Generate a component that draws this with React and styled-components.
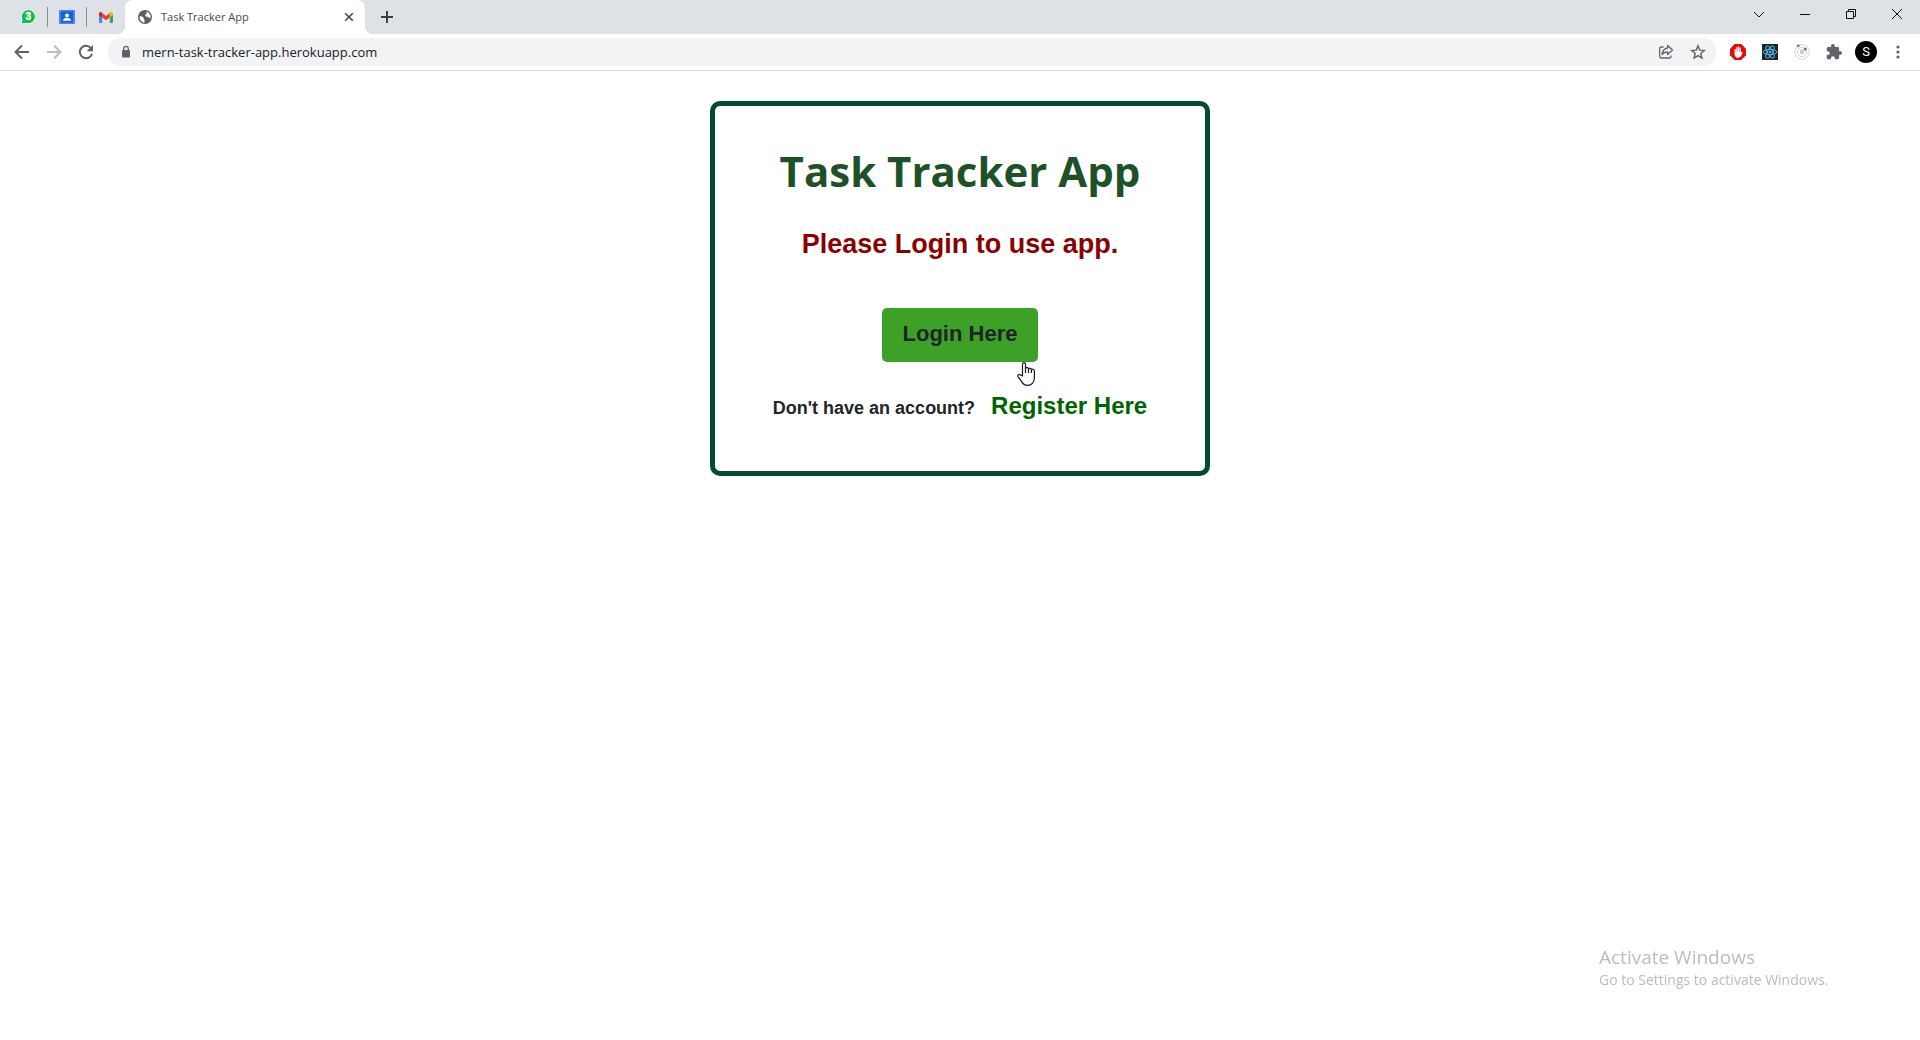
import React from "react";
import styled, { createGlobalStyle } from "styled-components";

const ui = `"Segoe UI", "Open Sans", "Noto Sans", sans-serif`;
const arial = `"Liberation Sans", Arial, sans-serif`;

const GlobalStyle = createGlobalStyle`
  *, *::before, *::after { box-sizing: border-box; }
  body { margin: 0; background: #fff; font-family: ${ui}; }
  h1, h2, p { margin: 0; }
  svg { display: block; flex: none; }
`;

const TabStrip = styled.header`
  display: flex;
  height: 34px;
  padding-left: 8px;
  background: #dee1e6;
`;

const PinnedTab = styled.button`
  display: flex;
  align-items: center;
  justify-content: center;
  width: 39px;
  padding: 0;
  border: 0;
  background: ${(p) =>
    p.$divided
      ? "linear-gradient(#8a8c91, #8a8c91) left center / 1px 20px no-repeat"
      : "transparent"};
`;

const ActiveTab = styled.div`
  position: relative;
  display: flex;
  align-items: center;
  gap: 8px;
  width: 240px;
  padding: 0 8px 0 12px;
  border-radius: 8px 8px 0 0;
  background: #fff;

  &::before,
  &::after {
    content: "";
    position: absolute;
    bottom: 0;
    width: 8px;
    height: 8px;
  }
  &::before {
    right: 100%;
    background: radial-gradient(circle at 0 0, transparent 8px, #fff 8px);
  }
  &::after {
    left: 100%;
    background: radial-gradient(circle at 100% 0, transparent 8px, #fff 8px);
  }
`;

const TabTitle = styled.span`
  flex: 1;
  color: #45474a;
  font-size: 11px;
  line-height: 16px;
  white-space: nowrap;
`;

const IconButton = styled.button`
  display: flex;
  align-items: center;
  justify-content: center;
  flex: none;
  width: ${(p) => p.$size || 28}px;
  height: ${(p) => p.$size || 28}px;
  padding: 0;
  border: 0;
  border-radius: 50%;
  background: transparent;
  color: ${(p) => p.$color || "#5f6368"};
`;

const NewTab = styled(IconButton)`
  align-self: center;
  margin-left: 8px;
`;

const WindowControls = styled.div`
  display: flex;
  margin-left: auto;
`;

const WindowButton = styled.button`
  display: flex;
  align-items: center;
  justify-content: center;
  width: 46px;
  height: 28px;
  padding: 0;
  border: 0;
  background: transparent;
  color: #111;
`;

const Toolbar = styled.nav`
  display: flex;
  align-items: center;
  gap: 4px;
  height: 37px;
  padding: 0 8px;
  border-bottom: 1px solid #dadce0;
  background: #fff;
`;

const AddressBar = styled.form`
  display: flex;
  align-items: center;
  gap: 4px;
  flex: 1;
  height: 28px;
  margin: 0 4px;
  padding: 0 4px 0 10px;
  border-radius: 14px;
  background: #f1f3f4;
`;

const AddressInput = styled.input`
  flex: 1;
  min-width: 0;
  margin-left: 4px;
  padding: 0;
  border: 0;
  outline: 0;
  background: transparent;
  color: #202124;
  font: 13px/20px ${ui};
`;

const Avatar = styled.span`
  display: grid;
  place-items: center;
  width: 22px;
  height: 22px;
  border-radius: 50%;
  background: #000;
  color: #fff;
  font: 13px/22px Roboto, sans-serif;
`;

const Page = styled.main`
  display: flex;
  justify-content: center;
  padding: 30px 16px;
`;

const Card = styled.section`
  display: flex;
  flex-direction: column;
  align-items: center;
  width: 500px;
  max-width: 100%;
  padding: 38px 20px 45px;
  border: 5px solid #044a35;
  border-radius: 10px;
`;

const Title = styled.h1`
  color: #1e5128;
  font-size: 42px;
  font-weight: 700;
  line-height: 54px;
`;

const Subtitle = styled.h2`
  margin-top: 30px;
  color: darkred;
  font: 700 27px/32px ${arial};
`;

const LoginButton = styled.button`
  position: relative;
  margin-top: 48px;
  padding: 0 21px 2px;
  border: 0;
  border-radius: 5px;
  background: #3da128;
  color: #212529;
  font: 700 22px/52px ${arial};
`;

const Pointer = styled.svg`
  position: absolute;
  top: 100%;
  right: 3px;
`;

const RegisterRow = styled.p`
  display: flex;
  align-items: baseline;
  gap: 16px;
  margin-top: 26px;
  color: #212529;
  font: 700 18px/36px ${arial};
`;

const RegisterLink = styled.a`
  color: darkgreen;
  font-size: 24px;
  text-decoration: none;
`;

const Watermark = styled.aside`
  position: fixed;
  right: 84px;
  bottom: 50px;
  width: 237px;
  color: #bcbcbc;
  font-size: 14px;
  line-height: 20px;
  pointer-events: none;
`;

const WatermarkTitle = styled.p`
  font-size: 19px;
  line-height: 26px;
`;

const WhatsAppIcon = () => (
  <svg width="16" height="16" viewBox="0 0 16 16">
    <circle cx="8.300" cy="7.700" r="7.500" fill="#fff" />
    <path d="M.5 15.700l1.500-6 4.500 4.800z" fill="#fff" />
    <circle cx="8.300" cy="7.700" r="6.600" fill="#0cc143" />
    <path d="M1.700 14.500l1-4.500 3.800 3.500z" fill="#0cc143" />
    <text x="8.300" y="11.300" textAnchor="middle" fill="#fff" stroke="#fff" strokeWidth=".4" fontFamily="Liberation Sans, sans-serif" fontSize="10" fontWeight="700">3</text>
  </svg>
);

const ContactsIcon = () => (
  <svg width="16" height="14" viewBox="0 0 16 14">
    <rect width="16" height="14" rx="1" fill="#4285f4" />
    <rect x="2" y="1.500" width="12" height="11" fill="#1a5fd0" />
    <circle cx="8" cy="5.400" r="1.900" fill="#fff" />
    <path d="M4 10.700c0-3.800 8-3.800 8 0z" fill="#fff" />
  </svg>
);

const GmailIcon = () => (
  <svg width="14" height="11" viewBox="0 0 14 11">
    <path d="M0 2v8a1 1 0 0 0 1 1h2.200V4.200z" fill="#4285f4" />
    <path d="M10.800 11H13a1 1 0 0 0 1-1V2l-3.200 2.200z" fill="#34a853" />
    <path d="M10.800 1v4.400L14 3V1.700C14 .1 12.300-.5 11.200.4z" fill="#fbbc04" />
    <path d="M3.200 5.400V1L7 3.900 10.800 1v4.400L7 8.300z" fill="#ea4335" />
    <path d="M0 1.700V3l3.200 2.400V1L2.800.4C1.700-.5 0 .1 0 1.700z" fill="#c5221f" />
  </svg>
);

const GlobeIcon = () => (
  <svg width="16" height="16" viewBox="0 0 16 16">
    <circle cx="8" cy="8" r="7" fill="#5a5d62" />
    <path d="M2.600 7.300c2.400.1 4.100.2 4.100 2.100 0 1 .8.800.8 1.700v2.600C4.600 13.300 2.300 10.800 2.600 7.300zM9.500 2.700c3 .7 4.500 3.500 4 6.200-.7.500-1.500.3-1.800-.5-.2-.7-1.400-.4-2.300-.7-1.100-.3-1.500-1.700-.8-2.400.5-.6 1.200-.4 1.200-1.200z" fill="#fff" />
  </svg>
);

const CloseIcon = () => (
  <svg width="10" height="10" viewBox="0 0 10 10" fill="none" stroke="currentColor" strokeWidth="1.600">
    <path d="M1.200 1.200l7.600 7.600M8.800 1.200L1.200 8.800" />
  </svg>
);

const PlusIcon = () => (
  <svg width="12" height="12" viewBox="0 0 12 12" fill="none" stroke="currentColor" strokeWidth="2">
    <path d="M6 0v12M0 6h12" />
  </svg>
);

const ArrowIcon = ({ flipped }) => (
  <svg width="16" height="16" viewBox="0 0 16 16" fill="none" stroke="currentColor" strokeWidth="2">
    <path d={flipped ? "M1 8h13M8 1.500L14.500 8 8 14.500" : "M15 8H2M8 1.500L1.500 8 8 14.500"} />
  </svg>
);

const ReloadIcon = () => (
  <svg width="16" height="16" viewBox="0 0 16 16" fill="none">
    <path d="M13.200 4.500A6.200 6.200 0 1 0 14 9.700" stroke="currentColor" strokeWidth="2" />
    <path d="M15 1v6.300H8.700z" fill="currentColor" />
  </svg>
);

const LockIcon = () => (
  <svg width="16" height="16" viewBox="0 0 16 16" fill="none">
    <rect x="4" y="6" width="8" height="7.500" rx="1" fill="currentColor" />
    <path d="M5.700 6.500V4.600a2.300 2.300 0 0 1 4.600 0v1.900" stroke="currentColor" strokeWidth="1.300" />
  </svg>
);

const ShareIcon = () => (
  <svg width="16" height="16" viewBox="0 0 16 16" fill="none" stroke="currentColor" strokeWidth="1.300" strokeLinejoin="round">
    <path d="M5.500 3H3.200a1.500 1.500 0 0 0-1.500 1.500v8A1.500 1.500 0 0 0 3.200 14h8.300a1.500 1.500 0 0 0 1.500-1.500v-1" />
    <path d="M9.600 1.500L14.500 6l-4.900 4.500V8C7 8 5.300 8.900 4.200 10.500 4.500 7 6.300 4.500 9.600 4z" />
  </svg>
);

const StarIcon = () => (
  <svg width="16" height="16" viewBox="0 0 16 16" fill="none" stroke="currentColor" strokeWidth="1.400">
    <path d="M8 1.800l1.700 4.300 4.600.4-3.500 3 1.100 4.500L8 11.600 4.100 14l1.100-4.500-3.500-3 4.600-.4z" />
  </svg>
);

const BlockerIcon = () => (
  <svg width="16" height="16" viewBox="0 0 16 16">
    <path d="M4.700 0h6.600L16 4.700v6.600L11.300 16H4.700L0 11.300V4.700z" fill="#e30b0b" />
    <path d="M7.700 13.700c-2 0-2.700-1.500-3.100-3.200V5.300c0-.8 1.200-.8 1.200 0v2.200h.4V3.700c0-.9 1.300-.9 1.300 0v3.500h.4V3c0-.9 1.300-.9 1.300 0v4.300h.4V4.200c0-.9 1.200-.9 1.200 0v4.900l.8-1.200c.5-.5 1.200-.1 1 .6-.7 2.400-1.700 5.200-4.900 5.200z" fill="#fff" />
  </svg>
);

const ReactIcon = () => (
  <svg width="16" height="16" viewBox="0 0 16 16">
    <rect width="16" height="16" fill="#20232a" />
    <g fill="none" stroke="#52bfe2" strokeWidth=".9">
      <ellipse cx="8" cy="8" rx="6.800" ry="2.600" />
      <ellipse cx="8" cy="8" rx="6.800" ry="2.600" transform="rotate(60 8 8)" />
      <ellipse cx="8" cy="8" rx="6.800" ry="2.600" transform="rotate(120 8 8)" />
    </g>
    <circle cx="8" cy="8" r="1.300" fill="#52bfe2" />
  </svg>
);

const OrbitIcon = () => (
  <svg width="16" height="16" viewBox="0 0 16 16">
    <g fill="none" stroke="#d2d2d2">
      <circle cx="8" cy="8" r="7.300" />
      <circle cx="8" cy="8" r="4.600" />
    </g>
    <circle cx="8" cy="8" r="2.400" fill="#cbcbcb" />
    <circle cx="4.200" cy="1.700" r="1.500" fill="#858585" />
    <circle cx="11.200" cy="5" r="1.500" fill="#6e6e6e" />
  </svg>
);

const PuzzleIcon = () => (
  <svg width="16" height="16" viewBox="1 1 22 22" fill="currentColor">
    <path d="M20.500 11H19V7c0-1.100-.9-2-2-2h-4V3.500a2.500 2.500 0 0 0-5 0V5H4c-1.100 0-2 .9-2 2v3.800h1.500a2.700 2.700 0 0 1 0 5.400H2V20c0 1.100.9 2 2 2h3.800v-1.500a2.700 2.700 0 0 1 5.400 0V22H17c1.100 0 2-.9 2-2v-4h1.500a2.500 2.500 0 0 0 0-5z" />
  </svg>
);

const DotsIcon = () => (
  <svg width="4" height="14" viewBox="0 0 4 14" fill="currentColor">
    <circle cx="2" cy="2" r="1.600" />
    <circle cx="2" cy="7" r="1.600" />
    <circle cx="2" cy="12" r="1.600" />
  </svg>
);

const windowIcons = {
  "Search tabs": "M0 3l5 5 5-5",
  Minimize: "M0 5.500h10",
  Restore: "M.5 2.500h7v7h-7zM2.500 2.500v-2h7v7h-2",
  Close: "M0 0l10 10M10 0L0 10",
};

export default function App() {
  return (
    <>
      <GlobalStyle />
      <TabStrip>
        <PinnedTab aria-label="WhatsApp"><WhatsAppIcon /></PinnedTab>
        <PinnedTab $divided aria-label="Contacts"><ContactsIcon /></PinnedTab>
        <PinnedTab $divided aria-label="Gmail"><GmailIcon /></PinnedTab>
        <ActiveTab>
          <GlobeIcon />
          <TabTitle>Task Tracker App</TabTitle>
          <IconButton $size={16} $color="#45474a" aria-label="Close tab"><CloseIcon /></IconButton>
        </ActiveTab>
        <NewTab $color="#3c4043" aria-label="New tab"><PlusIcon /></NewTab>
        <WindowControls>
          {Object.entries(windowIcons).map(([name, d]) => (
            <WindowButton key={name} aria-label={name}>
              <svg width="10" height="10" viewBox="0 0 10 10" fill="none" stroke="currentColor">
                <path d={d} />
              </svg>
            </WindowButton>
          ))}
        </WindowControls>
      </TabStrip>

      <Toolbar>
        <IconButton aria-label="Back"><ArrowIcon /></IconButton>
        <IconButton $color="#bbbdbf" aria-label="Forward"><ArrowIcon flipped /></IconButton>
        <IconButton aria-label="Reload"><ReloadIcon /></IconButton>
        <AddressBar>
          <IconButton type="button" $size={16} aria-label="Site information"><LockIcon /></IconButton>
          <AddressInput aria-label="Address" defaultValue="mern-task-tracker-app.herokuapp.com" />
          <IconButton type="button" aria-label="Share"><ShareIcon /></IconButton>
          <IconButton type="button" aria-label="Bookmark"><StarIcon /></IconButton>
        </AddressBar>
        <IconButton aria-label="Ad blocker"><BlockerIcon /></IconButton>
        <IconButton aria-label="React tools"><ReactIcon /></IconButton>
        <IconButton aria-label="Orbit"><OrbitIcon /></IconButton>
        <IconButton aria-label="Extensions"><PuzzleIcon /></IconButton>
        <IconButton aria-label="Profile"><Avatar>S</Avatar></IconButton>
        <IconButton aria-label="Menu"><DotsIcon /></IconButton>
      </Toolbar>

      <Page>
        <Card>
          <Title>Task Tracker App</Title>
          <Subtitle>Please Login to use app.</Subtitle>
          <LoginButton>
            Login Here
            <Pointer width="18" height="24" viewBox="0 0 18 24" fill="#fff" stroke="#1b1728" strokeWidth="1.200" strokeLinejoin="round" aria-hidden="true">
              <path d="M5.500 14V2.200c0-2 3-2 3 0V6c1-.8 2.700-.5 3 .6 1-.6 2.500-.2 2.900.8 1.300-.6 3 .1 3 1.700V16c0 4.500-3 7.400-6.900 7.400-3 0-4.700-1.500-6-4L1 14.600c-.7-1.700 1-2.800 2.300-1.700z" />
              <path d="M8.500 6v5M11.500 6.600V11M14.400 7.400V11" fill="none" />
            </Pointer>
          </LoginButton>
          <RegisterRow>
            Don't have an account?
            <RegisterLink href="#register">Register Here</RegisterLink>
          </RegisterRow>
        </Card>
      </Page>

      <Watermark>
        <WatermarkTitle>Activate Windows</WatermarkTitle>
        <p>Go to Settings to activate Windows.</p>
      </Watermark>
    </>
  );
}
